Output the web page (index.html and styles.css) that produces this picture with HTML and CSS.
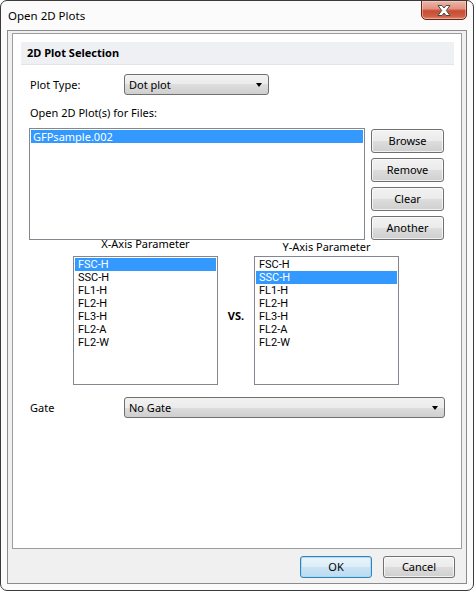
FILE: index.html
```html
<!DOCTYPE html>
<html>
<head>
<meta charset="utf-8">
<link rel="stylesheet" href="styles.css">
</head>
<body>
<div class="window">
  <div class="titlebar">
    <span class="title">Open 2D Plots</span>
    <div class="close">
      <svg width="14" height="11" viewBox="0 0 14 11"><path d="M1 0.5H5L7 3L9 0.5H13L9.3 5.5L13 10.5H9L7 8L5 10.5H1L4.7 5.5Z" fill="#fff" stroke="#4a4a4a" stroke-width="1" stroke-linejoin="round"/></svg>
    </div>
  </div>
  <div class="client">
    <div class="panel">
      <div class="section-head">2D Plot Selection</div>
      <div class="body">
        <div class="row plot-row">
          <span class="field-label">Plot Type:</span>
          <div class="combo combo-plot"><span>Dot plot</span><i class="arrow"></i></div>
        </div>
        <div class="files-label">Open 2D Plot(s) for Files:</div>
        <div class="files">
          <div class="listbox file-list">
            <div class="item sel">GFPsample.002</div>
          </div>
          <div class="btns">
            <button class="btn">Browse</button>
            <button class="btn">Remove</button>
            <button class="btn">Clear</button>
            <button class="btn">Another</button>
          </div>
        </div>
        <div class="params">
          <div class="param-col">
            <div class="param-label x-label">X-Axis Parameter</div>
            <div class="listbox plist">
              <div class="item sel">FSC-H</div>
              <div class="item">SSC-H</div>
              <div class="item">FL1-H</div>
              <div class="item">FL2-H</div>
              <div class="item">FL3-H</div>
              <div class="item">FL2-A</div>
              <div class="item">FL2-W</div>
            </div>
          </div>
          <div class="vs">VS.</div>
          <div class="param-col">
            <div class="param-label y-label">Y-Axis Parameter</div>
            <div class="listbox plist">
              <div class="item">FSC-H</div>
              <div class="item sel">SSC-H</div>
              <div class="item">FL1-H</div>
              <div class="item">FL2-H</div>
              <div class="item">FL3-H</div>
              <div class="item">FL2-A</div>
              <div class="item">FL2-W</div>
            </div>
          </div>
        </div>
        <div class="row gate-row">
          <span class="field-label">Gate</span>
          <div class="combo combo-gate"><span>No Gate</span><i class="arrow"></i></div>
        </div>
      </div>
    </div>
    <div class="footer">
      <button class="btn btn-foot ok">OK</button>
      <button class="btn btn-foot">Cancel</button>
    </div>
  </div>
</div>
</body>
</html>
```

FILE: styles.css
```css
html, body {
  margin: 0;
  padding: 0;
  background: #ffffff;
}

body {
  font-family: "Noto Sans", "Open Sans", sans-serif;
  font-size: 11px;
  color: #000;
}

.window {
  box-sizing: border-box;
  width: 474px;
  height: 591px;
  border: 1px solid #3a3a3a;
  border-radius: 7px;
  background: #fbfbfb;
  display: flex;
  flex-direction: column;
  overflow: hidden;
}

.titlebar {
  flex: none;
  height: 29px;
  display: flex;
  justify-content: space-between;
  align-items: flex-start;
  padding: 0 6px 0 7px;
}

.title {
  padding-top: 7px;
  line-height: 16px;
  font-size: 11.5px;
}

.close {
  box-sizing: border-box;
  width: 46px;
  height: 20px;
  margin-top: -1px;
  border: 1px solid #6a2419;
  border-radius: 0 0 5px 5px;
  background: linear-gradient(#eeb5a8 0%, #e19382 42%, #c84a33 55%, #cf5f44 85%, #e08a6c 100%);
  box-shadow: inset 0 0 0 1px rgba(255, 225, 215, 0.45);
  display: flex;
  align-items: center;
  justify-content: center;
}

.close svg {
  display: block;
}

.client {
  flex: 1;
  margin: 0 6px 6px 6px;
  border: 1px solid #8c8c8c;
  background: #f0f0f0;
  display: flex;
  flex-direction: column;
  min-height: 0;
}

.panel {
  flex: 1;
  margin: 2px 4px 0 4px;
  border: 1px solid #9c9c9c;
  background: #fff;
  min-height: 0;
}

.section-head {
  box-sizing: border-box;
  height: 23px;
  margin: 8px 7px 0 8px;
  padding-left: 6px;
  background: #eff0f4;
  border-bottom: 1px solid #e3e4e9;
  font-weight: bold;
  line-height: 22px;
}

.body {
  padding-left: 16px;
}

.row {
  display: flex;
  align-items: center;
}

.plot-row {
  margin-top: 9px;
}

.field-label {
  box-sizing: border-box;
  width: 95px;
  padding-left: 1px;
  line-height: 16px;
}

.combo {
  box-sizing: border-box;
  height: 21px;
  border: 1px solid #707070;
  border-radius: 3px;
  background: linear-gradient(#f2f2f2 0%, #ebebeb 50%, #dddddd 50%, #cfcfcf 100%);
  display: flex;
  align-items: center;
  justify-content: space-between;
  padding: 0 6px 0 4px;
  line-height: 19px;
}

.combo-plot {
  width: 145px;
}

.combo-gate {
  width: 321px;
}

.arrow {
  width: 0;
  height: 0;
  border-left: 3.5px solid transparent;
  border-right: 3.5px solid transparent;
  border-top: 4px solid #000;
}

.files-label {
  margin-top: 10px;
  padding-left: 1px;
  line-height: 16px;
}

.files {
  margin-top: 7px;
  display: flex;
  gap: 6px;
}

.listbox {
  box-sizing: border-box;
  border: 1px solid #828790;
  background: #fff;
  padding: 1px;
}

.file-list {
  width: 336px;
  height: 112px;
}

.item {
  height: 13px;
  line-height: 13px;
  padding-left: 2px;
  white-space: nowrap;
}

.plist .item {
  font-family: Roboto, "Noto Sans", sans-serif;
  font-size: 11px;
  padding-left: 3px;
}

.item.sel {
  background: #3399ff;
  color: #fff;
}

.btns {
  margin-top: 1px;
  display: flex;
  flex-direction: column;
  gap: 5px;
}

.btn {
  box-sizing: border-box;
  width: 73px;
  height: 24px;
  border: 1px solid #707070;
  border-radius: 3px;
  background: linear-gradient(#f2f2f2 0%, #ebebeb 50%, #dddddd 50%, #cfcfcf 100%);
  box-shadow: inset 0 0 0 1px rgba(255, 255, 255, 0.7);
  font-family: inherit;
  font-size: 11px;
  color: #000;
  padding: 0;
  line-height: 20px;
}

.params {
  margin-top: -4px;
  padding-left: 44px;
  display: flex;
}

.param-col {
  width: 145px;
  display: flex;
  flex-direction: column;
  align-items: center;
}

.param-label {
  line-height: 16px;
  height: 16px;
  white-space: nowrap;
}

.x-label {
  margin-bottom: 4px;
}

.y-label {
  padding-top: 3px;
  margin-bottom: 1px;
}

.plist {
  width: 145px;
  height: 129px;
}

.vs {
  width: 36px;
  text-align: center;
  font-weight: bold;
  line-height: 16px;
  margin-top: 72px;
}

.gate-row {
  margin-top: 12px;
}

.footer {
  flex: none;
  height: 34px;
  box-sizing: border-box;
  padding: 7px 11px 0 0;
  display: flex;
  justify-content: flex-end;
  gap: 11px;
}

.btn-foot {
  width: 72px;
  height: 22px;
  line-height: 18px;
}

.btn.ok {
  border-color: #3c7fb1;
  background: linear-gradient(#eaf4fb 0%, #dcedf8 50%, #c9e3f5 50%, #bcdcf1 100%);
  box-shadow: inset 0 0 0 1px rgba(160, 220, 250, 0.9);
}
```
